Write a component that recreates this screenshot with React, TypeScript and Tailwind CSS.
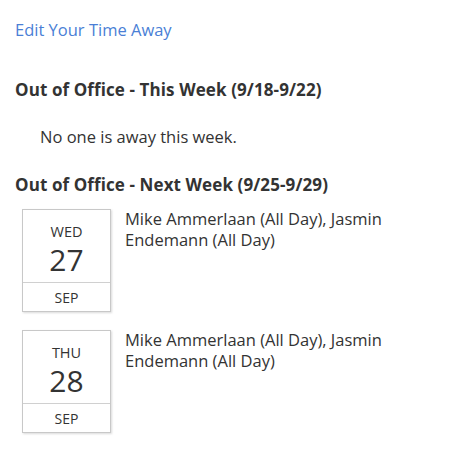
export default function App() {
  const days = [
    { dow: "WED", day: "27", mon: "SEP" },
    { dow: "THU", day: "28", mon: "SEP" },
  ];
  return (
    <div
      className="w-[472px] h-[455px] bg-white text-[#333333] pl-[15px] pt-[20px]"
      style={{ fontFamily: '"Open Sans", "Noto Sans", sans-serif' }}
    >
      <a className="text-[16.5px] text-[#4a7fd6] leading-5 block">Edit Your Time Away</a>
      <h2 className="mt-[40px] text-[17px] font-bold leading-5 tracking-[0.1px]">
        Out of Office - This Week (9/18-9/22)
      </h2>
      <p className="mt-[27px] ml-[25px] text-[16.5px] leading-5">No one is away this week.</p>
      <h2 className="mt-[28px] text-[17px] font-bold leading-5 tracking-[0.1px]">
        Out of Office - Next Week (9/25-9/29)
      </h2>
      <div className="mt-[14px] flex flex-col gap-[18px] pl-[7px]">
        {days.map((d) => (
          <div key={d.day} className="flex gap-[14px]">
            <div className="w-[89px] h-[103px] border border-[#c8c8c8] shadow-[1px_1px_2px_rgba(0,0,0,0.15)] flex flex-col shrink-0">
              <div className="h-[72px] flex flex-col items-center pt-[14px]">
                <span className="text-[14.5px] leading-[16px]">{d.dow}</span>
                <span className="text-[30px] leading-[30px] mt-[5px]">{d.day}</span>
              </div>
              <div className="border-t border-[#d0d0d0] flex-1 flex items-center justify-center text-[14px]">
                {d.mon}
              </div>
            </div>
            <div className="text-[16.5px] leading-[21px] w-[290px] -mt-[1px]">
              Mike Ammerlaan (All Day), Jasmin Endemann (All Day)
            </div>
          </div>
        ))}
      </div>
    </div>
  );
}
